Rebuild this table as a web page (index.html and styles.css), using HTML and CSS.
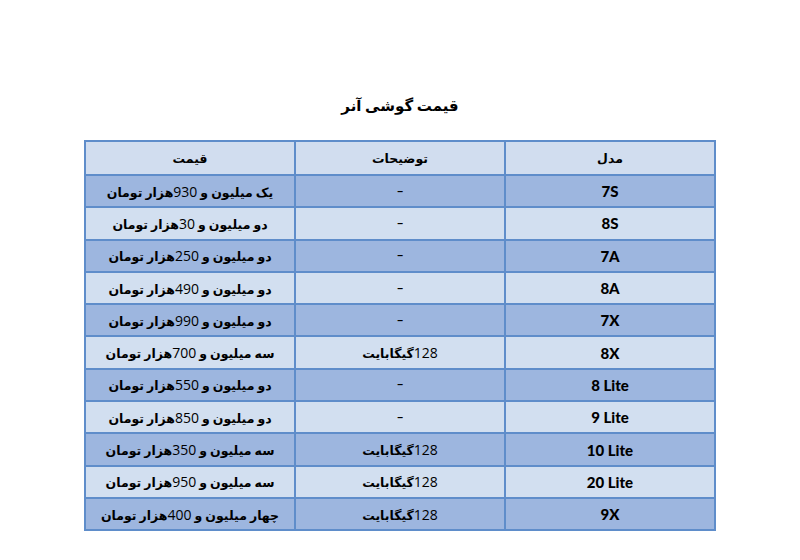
FILE: index.html
```html
<!DOCTYPE html>
<html lang="fa">
<head>
<meta charset="utf-8">
<link rel="stylesheet" href="styles.css">
</head>
<body>
<div class="page" dir="rtl">
  <h1 class="title">قیمت گوشی آنر</h1>
  <table class="prices">
    <thead>
      <tr class="head"><th>مدل</th><th>توضیحات</th><th>قیمت</th></tr>
    </thead>
    <tbody>
      <tr class="dark"><td class="model" dir="ltr">7S</td><td>–</td><td>یک میلیون و <span class="num">930</span>هزار تومان</td></tr>
      <tr class="light"><td class="model" dir="ltr">8S</td><td>–</td><td>دو میلیون و <span class="num">30</span>هزار تومان</td></tr>
      <tr class="dark"><td class="model" dir="ltr">7A</td><td>–</td><td>دو میلیون و <span class="num">250</span>هزار تومان</td></tr>
      <tr class="light"><td class="model" dir="ltr">8A</td><td>–</td><td>دو میلیون و <span class="num">490</span>هزار تومان</td></tr>
      <tr class="dark"><td class="model" dir="ltr">7X</td><td>–</td><td>دو میلیون و <span class="num">990</span>هزار تومان</td></tr>
      <tr class="light"><td class="model" dir="ltr">8X</td><td><span class="num">128</span>گیگابایت</td><td>سه میلیون و <span class="num">700</span>هزار تومان</td></tr>
      <tr class="dark"><td class="model" dir="ltr">8 Lite</td><td>–</td><td>دو میلیون و <span class="num">550</span>هزار تومان</td></tr>
      <tr class="light"><td class="model" dir="ltr">9 Lite</td><td>–</td><td>دو میلیون و <span class="num">850</span>هزار تومان</td></tr>
      <tr class="dark"><td class="model" dir="ltr">10 Lite</td><td><span class="num">128</span>گیگابایت</td><td>سه میلیون و <span class="num">350</span>هزار تومان</td></tr>
      <tr class="light"><td class="model" dir="ltr">20 Lite</td><td><span class="num">128</span>گیگابایت</td><td>سه میلیون و <span class="num">950</span>هزار تومان</td></tr>
      <tr class="dark"><td class="model" dir="ltr">9X</td><td><span class="num">128</span>گیگابایت</td><td>چهار میلیون و <span class="num">400</span>هزار تومان</td></tr>
    </tbody>
  </table>
</div>
</body>
</html>
```

FILE: styles.css
```css
html, body {
  margin: 0;
  padding: 0;
  background: #ffffff;
}

.page {
  width: 800px;
  padding-top: 94px;
  font-family: Lato, "DejaVu Sans", sans-serif;
  color: #000;
}

.title {
  margin: 0 0 24px 0;
  text-align: center;
  font-size: 15px;
  font-weight: bold;
  line-height: 22px;
}

.prices {
  width: 632px;
  margin: 0 auto;
  border-collapse: collapse;
  table-layout: fixed;
  font-size: 12.5px;
  font-weight: bold;
}

.prices th,
.prices td {
  border: 2px solid #5f8dca;
  text-align: center;
  vertical-align: middle;
  padding: 0 4px;
  height: 30.3px;
}

.prices th {
  height: 32px;
}

.prices td.model {
  font-size: 15px;
  font-weight: 900;
}

.num {
  font-family: "Open Sans", Lato, sans-serif;
  font-weight: normal;
  font-size: 14px;
}

.head {
  background: #d1ddef;
}

.dark {
  background: #9db6df;
}

.light {
  background: #d2dff0;
}
```
